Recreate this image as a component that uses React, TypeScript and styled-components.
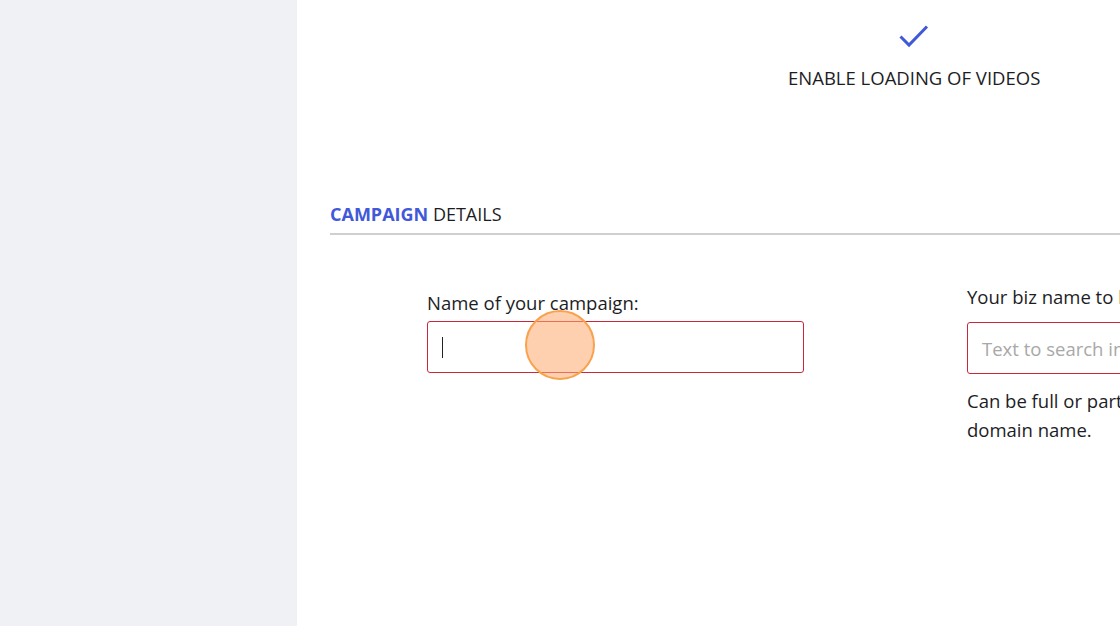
import React from "react";
import styled, { createGlobalStyle } from "styled-components";

const GlobalStyle = createGlobalStyle`
  html, body {
    margin: 0;
    padding: 0;
    overflow: hidden;
  }
  body {
    font-family: "Open Sans", "Noto Sans", sans-serif;
    color: #1d1d1f;
    background: #fff;
  }
`;

export default function App() {
  return (
    <>
      <GlobalStyle />
      <Page>
        <Sidebar />
        <Main>
          <Options>
            <Option>
              <svg width="30" height="24" viewBox="0 0 30 24">
                <path d="M1.5 12.5 L10 21 L28 2.5" fill="none" stroke="#4159d9" strokeWidth="3" />
              </svg>
              <span>ENABLE LOADING OF VIDEOS</span>
            </Option>
          </Options>

          <SectionTitle>
            <b>CAMPAIGN</b> DETAILS
          </SectionTitle>

          <Form>
            <Field>
              <Label>Name of your campaign:</Label>
              <InputBox>
                <Caret />
                <Touch />
              </InputBox>
            </Field>
            <Field $top={-6}>
              <Label>Your biz name to look for</Label>
              <InputBox $wide>
                <Placeholder>Text to search in</Placeholder>
              </InputBox>
              <Help>Can be full or partial business or domain name.</Help>
            </Field>
          </Form>
        </Main>
      </Page>
    </>
  );
}

const Page = styled.div`
  display: flex;
  width: 1120px;
  height: 627px;
  overflow: hidden;
`;

const Sidebar = styled.aside`
  flex: 0 0 297px;
  height: 626px;
  background: #eff1f5;
`;

const Main = styled.main`
  flex: 0 0 1000px;
  padding: 0 0 0 33px;
  display: flex;
  flex-direction: column;
`;

const Options = styled.div`
  display: flex;
  padding: 24px 0 0 458px;
  height: 178px;
  box-sizing: border-box;
`;

const Option = styled.div`
  display: flex;
  flex-direction: column;
  align-items: center;
  gap: 17px;

  span {
    font-size: 18.5px;
    color: #1d1d1f;
    white-space: nowrap;
  }
`;

const SectionTitle = styled.h2`
  margin: 24px 0 0;
  padding-bottom: 7px;
  font-size: 18px;
  font-weight: 400;
  border-bottom: 2px solid #cfcfcf;
  color: #1d1d1f;

  b {
    color: #4159d9;
    font-weight: 700;
  }
`;

const Form = styled.div`
  display: flex;
  align-items: flex-start;
  gap: 163px;
  padding: 55px 0 0 97px;
`;

const Field = styled.div<{ $top?: number }>`
  display: flex;
  flex-direction: column;
  margin-top: ${(p) => p.$top ?? 0}px;
  width: 377px;
  flex-shrink: 0;
`;

const Label = styled.label`
  font-size: 18.5px;
  line-height: 26px;
  margin-bottom: 5px;
  white-space: nowrap;
`;

const InputBox = styled.div<{ $wide?: boolean }>`
  position: relative;
  height: 52px;
  border: 1px solid #c8283a;
  border-radius: 3px;
  box-sizing: border-box;
  display: flex;
  align-items: center;
  padding-left: 14px;
  width: ${(p) => (p.$wide ? "400px" : "377px")};
  margin-top: ${(p) => (p.$wide ? "7px" : "0")};
`;

const Caret = styled.div`
  width: 1px;
  height: 21px;
  background: #222;
`;

const Touch = styled.div`
  position: absolute;
  left: 97px;
  top: -12px;
  width: 70px;
  height: 70px;
  border-radius: 50%;
  background: rgba(255, 170, 110, 0.55);
  border: 2px solid #f9a24d;
  box-sizing: border-box;
`;

const Placeholder = styled.span`
  font-size: 18.5px;
  color: #a8a8a8;
  white-space: nowrap;
`;

const Help = styled.p`
  margin: 12px 0 0;
  font-size: 18.5px;
  line-height: 29px;
  width: 330px;
`;
